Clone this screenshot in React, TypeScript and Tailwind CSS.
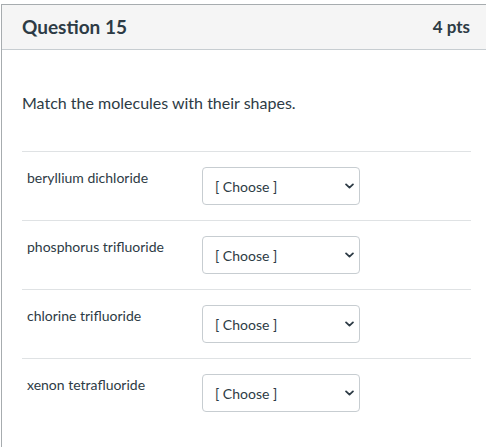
const rows = [
  "beryllium dichloride",
  "phosphorus trifluoride",
  "chlorine trifluoride",
  "xenon tetrafluoride",
];

function ChooseSelect({ label }: { label: string }) {
  return (
    <div className="relative w-[158px] shrink-0">
      <select
        aria-label={label}
        defaultValue=""
        className="block h-[38px] w-full appearance-none rounded-[4px] border border-[#c7cdd1] bg-white pl-[12px] pr-8 text-[14px] text-[#2d3b45] outline-none"
      >
        <option value="">[ Choose ]</option>
      </select>
      <svg
        viewBox="0 0 10 6"
        className="pointer-events-none absolute right-[6px] top-1/2 h-[6px] w-[9px] -translate-y-1/2"
        fill="none"
        stroke="#2d3b45"
        strokeWidth="2"
        strokeLinecap="round"
        strokeLinejoin="round"
      >
        <path d="M1.2 1.2 5 4.8 8.8 1.2" />
      </svg>
    </div>
  );
}

export default function App() {
  return (
    <div className="h-[447px] w-[486px] overflow-hidden bg-white pl-[1px] pt-[4px] font-['Lato','Open_Sans',sans-serif] text-[#2d3b45]">
      <div className="h-[500px] w-[489px] border-l border-t border-[#a7acaf]">
        <div className="flex h-[45px] items-center justify-between border-b border-[#c7cdd1] bg-[#f5f5f5] pl-[20px] pr-[20px]">
          <h2 className="text-[19px] font-bold">Question 15</h2>
          <span className="text-[17px] font-bold">4 pts</span>
        </div>

        <div className="pl-[20px] pr-[19px]">
          <p className="pt-[41px] text-[16px] leading-6">Match the molecules with their shapes.</p>

          <div className="mt-[36px]">
            {rows.map((r) => (
              <div
                key={r}
                className="flex items-start border-t border-[#dfe2e4] py-[15px]"
              >
                <div className="w-[180px] pl-[5px] pt-[1px] text-[14px] leading-5">{r}</div>
                <ChooseSelect label={r} />
              </div>
            ))}
          </div>
        </div>
      </div>
    </div>
  );
}
